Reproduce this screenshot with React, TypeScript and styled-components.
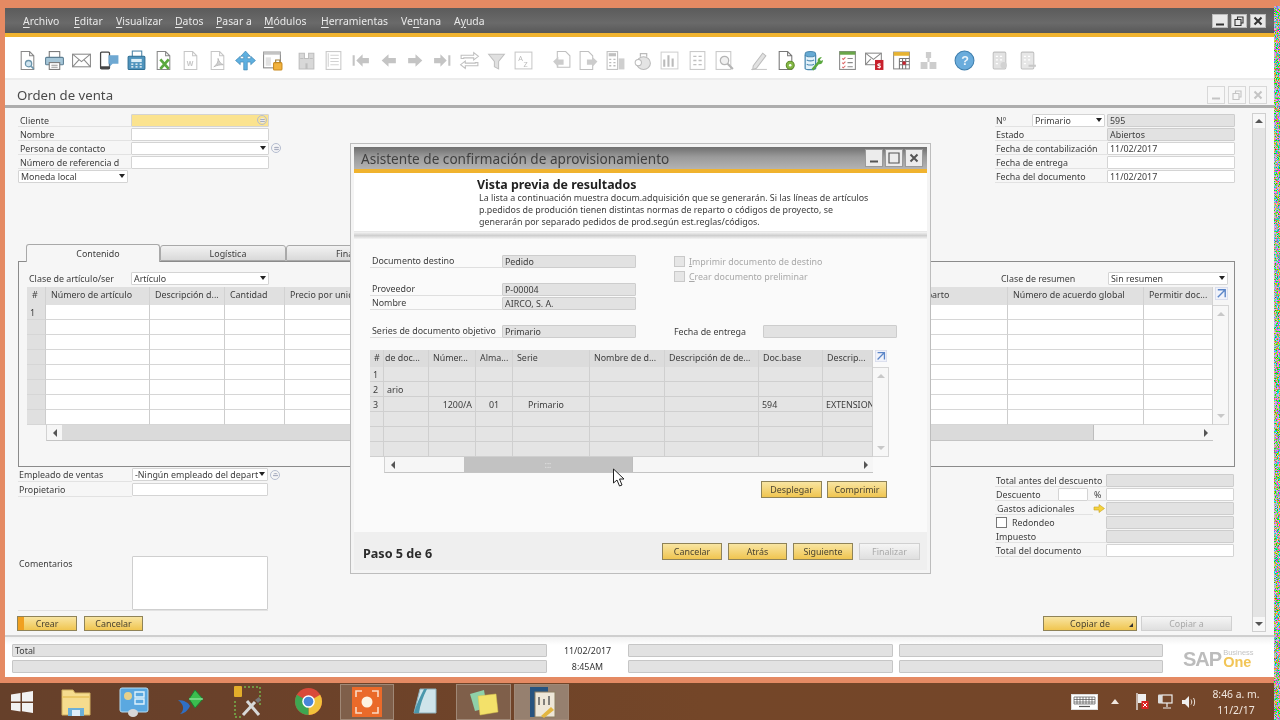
import React from 'react'
import styled, { createGlobalStyle } from 'styled-components'

const GlobalStyle = createGlobalStyle`
	html, body {
		margin: 0;
		padding: 0;
		background: #e58a63;
	}
	* {
		box-sizing: border-box;
	}
`

const Screen = styled.div`
	position: relative;
	width: 1280px;
	height: 720px;
	overflow: hidden;
	display: flex;
	flex-direction: column;
	background: #e58a63;
	color: #3c3c3c;
	font-family: 'Noto Sans', 'Open Sans', sans-serif;
	font-size: 8.9px;
	filter: blur(0.4px);
`

const Desktop = styled.div`
	height: 683px;
	padding: 8px 0 6px 5px;
	display: flex;
`

const AppWindow = styled.div`
	width: 1269px;
	display: flex;
	flex-direction: column;
	background: #f6f6f6;
`

const Noise = styled.svg`
	position: absolute;
	top: 6px;
	right: 0;
	width: 6px;
	height: 714px;
`

const MenuBar = styled.div`
	height: 29px;
	padding: 2px 8px 2px 18px;
	display: flex;
	align-items: center;
	background: linear-gradient(#5b5b5b, #6a6a6a 60%, #585858);
	border-bottom: 4px solid #f0b32f;
	color: #e9e9e9;
	font-size: 10.4px;
`

const MenuItem = styled.span<{ $w: number }>`
	width: ${(p) => p.$w}px;
	flex: none;
	u {
		text-underline-offset: 2px;
	}
`

const WinButtons = styled.div`
	margin-left: auto;
	display: flex;
	gap: 3px;
`

const WinButton = styled.div<{ $dim?: boolean }>`
	width: ${(p) => (p.$dim ? 18 : 16)}px;
	height: ${(p) => (p.$dim ? 18 : 14)}px;
	display: flex;
	align-items: center;
	justify-content: center;
	background: ${(p) => (p.$dim ? '#f7f7f7' : '#e8e8e8')};
	border: 1px solid ${(p) => (p.$dim ? '#d8d8d8' : '#bbb')};
	color: ${(p) => (p.$dim ? '#c4c4c4' : '#333')};
`

const Toolbar = styled.div`
	height: 43px;
	padding: 5px 0 0 9px;
	display: flex;
	align-items: center;
	background: #fff;
	border-bottom: 2px solid #ececec;
`

const Tool = styled.div<{ $gap?: number }>`
	width: 27.2px;
	flex: none;
	margin-left: ${(p) => p.$gap ?? 0}px;
	display: flex;
	justify-content: center;
	svg {
		display: block;
	}
`

const FormTitle = styled.div`
	height: 28px;
	padding: 4px 7px 0 12px;
	display: flex;
	align-items: center;
	justify-content: space-between;
	border-bottom: 3px solid #adadad;
	font-size: 13.2px;
	color: #4a4a4a;
`

const FormBody = styled.div`
	height: 529px;
	padding: 5px 8px 0 13px;
	display: flex;
	border-bottom: 2px solid #cfcfcf;
`

const FormMain = styled.div`
	width: 1217px;
	display: flex;
	flex-direction: column;
`

const HeaderBlock = styled.div`
	height: 130px;
	display: flex;
	justify-content: space-between;
`

const Rows = styled.div<{ $w: number }>`
	width: ${(p) => p.$w}px;
	display: flex;
	flex-direction: column;
`

const Row = styled.div<{ $cols: string; $h?: number }>`
	height: ${(p) => p.$h ?? 14}px;
	display: grid;
	grid-template-columns: ${(p) => p.$cols};
	align-items: center;
`

const Label = styled.div<{ $pad?: number }>`
	height: 100%;
	padding: 1px 0 0 ${(p) => p.$pad ?? 2}px;
	display: flex;
	align-items: center;
	border-bottom: 1px solid #e2e2e2;
	white-space: nowrap;
	overflow: hidden;
`

const Field = styled.div<{ $tone?: 'white' | 'gray' | 'yellow' }>`
	position: relative;
	height: 13px;
	padding: 0 2px;
	display: flex;
	align-items: center;
	white-space: nowrap;
	overflow: hidden;
	border: 1px solid ${(p) => (p.$tone === 'gray' ? '#cdcdcd' : '#d4d4d4')};
	border-radius: 1px;
	background: ${(p) => (p.$tone === 'gray' ? '#e2e2e2' : p.$tone === 'yellow' ? '#fbe38f' : '#fff')};
`

const Caret = styled.i`
	position: absolute;
	right: 2px;
	top: 3px;
	width: 0;
	height: 0;
	border: 3.5px solid transparent;
	border-top: 4px solid #222;
	border-bottom: 0;
`

const ListDot = styled.span<{ $inside?: boolean }>`
	width: 10px;
	height: 10px;
	margin-left: ${(p) => (p.$inside ? 'auto' : '2px')};
	margin-right: ${(p) => (p.$inside ? '-1px' : '0')};
	flex: none;
	border-radius: 50%;
	border: 1px solid #b5bdd0;
	background: repeating-linear-gradient(#e8e8ef 0 1px, #a9afc0 1px 2px);
	background-clip: content-box;
	padding: 1.5px;
`

const TabStrip = styled.div`
	height: 18px;
	padding-left: 8px;
	display: flex;
	align-items: flex-end;
`

const Tab = styled.div<{ $active?: boolean; $w: number }>`
	width: ${(p) => p.$w}px;
	height: ${(p) => (p.$active ? 18 : 16)}px;
	margin-bottom: ${(p) => (p.$active ? -1 : 0)}px;
	padding-left: 10px;
	position: relative;
	z-index: ${(p) => (p.$active ? 1 : 0)};
	display: flex;
	align-items: center;
	justify-content: center;
	border: 1px solid #a9a9a9;
	border-bottom: ${(p) => (p.$active ? '0' : '1px solid #a9a9a9')};
	border-radius: 3px 3px 0 0;
	background: ${(p) => (p.$active ? '#f6f6f6' : 'linear-gradient(#f2f2f2, #d9d9d9)')};
`

const Panel = styled.div`
	height: 206px;
	padding-top: 10px;
	border: 1px solid #8b8b8b;
`

const PanelTop = styled.div`
	height: 13px;
	padding: 0 6px 0 10px;
	display: flex;
	justify-content: space-between;
`

const PanelRow = styled.div<{ $label: number; $field: number }>`
	display: grid;
	grid-template-columns: ${(p) => p.$label}px ${(p) => p.$field}px;
	align-items: center;
`

const Sheet = styled.div<{ $left: number }>`
	margin: 2px 0 0 ${(p) => p.$left}px;
	display: flex;
	flex-direction: column;
`

const SheetTop = styled.div`
	display: flex;
`

const SheetGrid = styled.div<{ $w: number }>`
	width: ${(p) => p.$w}px;
	flex: none;
	overflow: hidden;
`

const SheetHead = styled.div<{ $cols: string; $h: number; $tone: string }>`
	height: ${(p) => p.$h}px;
	display: grid;
	grid-template-columns: ${(p) => p.$cols};
	background: ${(p) => p.$tone};
`

const HeadCell = styled.div<{ $pad: number }>`
	padding: 0 2px 3px ${(p) => p.$pad}px;
	display: flex;
	align-items: center;
	white-space: nowrap;
	overflow: hidden;
	border-right: 1px solid #d2d2d2;
`

const SheetRow = styled.div<{ $cols: string; $dim?: boolean }>`
	height: 15px;
	display: grid;
	grid-template-columns: ${(p) => p.$cols};
	background: ${(p) => (p.$dim ? '#e4e4e4' : '#fff')};
`

const Cell = styled.div<{ $align?: string; $head?: boolean; $dim?: boolean; $pad?: number }>`
	padding: 0 3px 0 ${(p) => p.$pad ?? 3}px;
	display: flex;
	align-items: center;
	justify-content: ${(p) => p.$align ?? 'flex-start'};
	white-space: nowrap;
	overflow: hidden;
	border-right: 1px solid ${(p) => (p.$dim ? '#cfcfcf' : '#cdcdcd')};
	border-bottom: 1px solid ${(p) => (p.$dim ? '#cfcfcf' : '#d6d6d6')};
	background: ${(p) => (p.$head ? '#e0e0e0' : 'transparent')};
`

const SheetSide = styled.div`
	width: 16px;
	flex: none;
	display: flex;
	flex-direction: column;
`

const ExpandBox = styled.div<{ $h: number }>`
	height: ${(p) => p.$h}px;
	display: flex;
	align-items: flex-start;
	justify-content: center;
	svg {
		display: block;
	}
`

const VTrack = styled.div`
	flex: 1;
	display: flex;
	flex-direction: column;
	justify-content: space-between;
	align-items: center;
	padding: 3px 0;
	background: #f7f7f7;
	border: 1px solid #d6d6d6;
	border-left: 0;
`

const ArrowUp = styled.i<{ $dark?: boolean }>`
	width: 0;
	height: 0;
	margin: 3px 0;
	border: 4px solid transparent;
	border-top: 0;
	border-bottom: 4px solid ${(p) => (p.$dark ? '#555' : '#c8c8c8')};
`

const ArrowDown = styled(ArrowUp)`
	border-bottom: 0;
	border-top: 4px solid ${(p) => (p.$dark ? '#555' : '#c8c8c8')};
`

const HScroll = styled.div<{ $left: number; $w: number }>`
	width: ${(p) => p.$w}px;
	height: 16px;
	margin-left: ${(p) => p.$left}px;
	display: flex;
	align-items: stretch;
	background: #f6f6f6;
	border-bottom: 1px solid #c4c4c4;
	border-left: 1px solid #d2d2d2;
`

const HButton = styled.div`
	width: 15px;
	flex: none;
	display: flex;
	align-items: center;
	justify-content: center;
	&::before {
		content: '';
		border: 4px solid transparent;
		border-left: 0;
		border-right: 4px solid #555;
	}
`

const HButtonRight = styled(HButton)`
	margin-left: auto;
	&::before {
		border: 4px solid transparent;
		border-right: 0;
		border-left: 4px solid #555;
	}
`

const HThumb = styled.div<{ $w: number; $left: number; $tone: string }>`
	width: ${(p) => p.$w}px;
	margin-left: ${(p) => p.$left}px;
	display: flex;
	align-items: center;
	justify-content: center;
	background: ${(p) => p.$tone};
	color: #e8e8e8;
	font-size: 8px;
	line-height: 1;
	border-right: 1px solid #bdbdbd;
`

const Lower = styled.div`
	height: 149px;
	display: flex;
	justify-content: space-between;
`

const LowerLeft = styled.div`
	width: 265px;
	display: flex;
	flex-direction: column;
`

const LowerRight = styled.div`
	width: 240px;
	padding-top: 6px;
	display: flex;
	flex-direction: column;
`

const Comments = styled.div`
	width: 250px;
	margin-top: 59px;
	height: 55px;
	display: grid;
	grid-template-columns: 114px 136px;
	border-bottom: 1px solid #e2e2e2;
`

const CommentLabel = styled.div`
	padding: 1px 0 0 1px;
`

const CommentBox = styled.div`
	background: #fff;
	border: 1px solid #cfcfcf;
	border-radius: 1px;
`

const RoundCheck = styled.span`
	display: flex;
	align-items: center;
	gap: 5px;
	padding-left: 1px;
`

const Checkbox = styled.i<{ $dim?: boolean }>`
	width: 11px;
	height: 11px;
	flex: none;
	background: ${(p) => (p.$dim ? '#e6e6e6' : '#fff')};
	border: 1px solid ${(p) => (p.$dim ? '#c9c9c9' : '#777')};
`

const Buttons = styled.div`
	display: flex;
	justify-content: space-between;
	padding-right: 3px;
	margin-left: -1px;
`

const ButtonGroup = styled.div<{ $gap: number }>`
	display: flex;
	gap: ${(p) => p.$gap}px;
`

const YellowButton = styled.div<{ $w: number; $h?: number; $off?: boolean; $focus?: boolean }>`
	position: relative;
	width: ${(p) => p.$w}px;
	height: ${(p) => p.$h ?? 15}px;
	display: flex;
	align-items: center;
	justify-content: center;
	border: 1px solid ${(p) => (p.$off ? '#d0d0d0' : '#8f8358')};
	color: ${(p) => (p.$off ? '#a9a9a9' : '#4a4330')};
	background: ${(p) =>
		p.$off
			? 'linear-gradient(#f5f5f5, #dfdfdf)'
			: p.$focus
				? 'linear-gradient(90deg, #f0a020 0 6px, transparent 6px), linear-gradient(#f8e5a2, #f0c550)'
				: 'linear-gradient(#f8e5a2, #f0c550)'};
`

const MenuMark = styled.i`
	position: absolute;
	right: 3px;
	bottom: 3px;
	width: 0;
	height: 0;
	border-left: 4px solid transparent;
	border-bottom: 4px solid #333;
`

const FormScroll = styled.div`
	width: 14px;
	height: 519px;
	margin-left: 17px;
	display: flex;
	flex-direction: column;
	justify-content: space-between;
	align-items: center;
	background: #e4e4e4;
	border: 1px solid #cfcfcf;
`

const ScrollEnd = styled.div`
	width: 12px;
	height: 14px;
	display: flex;
	align-items: center;
	justify-content: center;
	background: #f7f7f7;
`

const StatusBar = styled.div`
	height: 40px;
	padding: 7px 0 0 7px;
	display: grid;
	grid-template-columns: 535px 81px 265px 6px 264px 1fr;
	grid-template-rows: 13px 13px;
	row-gap: 3px;
	background: linear-gradient(#f1f1f1, #fff 8px);
`

const StatusField = styled.div`
	padding-left: 2px;
	display: flex;
	align-items: center;
	background: #e2e2e2;
	border: 1px solid #c6c6c6;
	border-radius: 1px;
`

const StatusText = styled.div`
	display: flex;
	align-items: center;
	justify-content: center;
	color: #333;
`

const Gap = styled.div``

const SapLogo = styled.div`
	grid-row: 1 / span 2;
	grid-column: 6;
	padding: 1px 0 0 20px;
	display: flex;
	align-items: center;
	gap: 2px;
`

const SapMark = styled.span`
	font-family: 'Liberation Sans', sans-serif;
	font-weight: 700;
	font-size: 20px;
	letter-spacing: -1px;
	color: #bcbcbc;
`

const SapStack = styled.span`
	display: flex;
	flex-direction: column;
	line-height: 1;
	font-family: 'Liberation Sans', sans-serif;
`

const SapBusiness = styled.span`
	font-size: 7.5px;
	color: #c4c4c4;
`

const SapOne = styled.span`
	font-size: 14.5px;
	font-weight: 700;
	color: #f2c557;
	margin-top: -1px;
`

const Taskbar = styled.div`
	height: 37px;
	display: flex;
	align-items: center;
	padding-right: 9px;
	background: linear-gradient(90deg, #66402a, #6a412a 18%, #744628 55%, #74462a);
	color: #f0e6de;
`

const TaskSlot = styled.div<{ $w: number; $gap?: number; $on?: 'soft' | 'strong' }>`
	width: ${(p) => p.$w}px;
	height: 36px;
	margin-left: ${(p) => p.$gap ?? 0}px;
	flex: none;
	display: flex;
	align-items: center;
	justify-content: center;
	background: ${(p) => (p.$on === 'strong' ? '#96806f' : p.$on === 'soft' ? '#7f5f4a' : 'transparent')};
	border: ${(p) => (p.$on ? '1px solid #a08876' : '0')};
`

const Tray = styled.div`
	margin-left: auto;
	display: flex;
	align-items: center;
`

const TrayIcon = styled.div<{ $w: number }>`
	width: ${(p) => p.$w}px;
	display: flex;
	justify-content: center;
`

const Clock = styled.div`
	width: 70px;
	margin-left: 1px;
	display: flex;
	flex-direction: column;
	align-items: center;
	gap: 4px;
	font-size: 10.4px;
	line-height: 12px;
`

const Dialog = styled.div`
	position: absolute;
	left: 350px;
	top: 143px;
	width: 581px;
	height: 431px;
	padding: 3px;
	display: flex;
	flex-direction: column;
	background: #f4f4f4;
	border: 1px solid #bdbdbd;
`

const DialogTitle = styled.div`
	height: 26px;
	padding: 0 4px 0 7px;
	display: flex;
	align-items: center;
	justify-content: space-between;
	flex: none;
	background: linear-gradient(#6f6f6f, #9a9a9a 45%, #b3b3b3);
	border-bottom: 4px solid #f0b32f;
	font-size: 13.6px;
	color: #3f3f3f;
`

const DialogButton = styled.div`
	width: 18px;
	height: 18px;
	display: flex;
	align-items: center;
	justify-content: center;
	background: #ececec;
	border: 1px solid #9a9a9a;
	color: #555;
`

const DialogButtons = styled.div`
	display: flex;
	gap: 2px;
	margin-top: -1px;
`

const DialogHead = styled.div`
	height: 59px;
	flex: none;
	padding: 4px 0 0 123px;
	background: #fff;
	border-bottom: 1px solid #e8e8e8;
`

const WizardTitle = styled.div`
	font-size: 12.4px;
	font-weight: 700;
	line-height: 15px;
	color: #222;
`

const WizardText = styled.div`
	padding-left: 2px;
	line-height: 12px;
	color: #3c3c3c;
	white-space: nowrap;
`

const DialogRule = styled.div`
	height: 7px;
	flex: none;
	background: linear-gradient(#f4f4f4, #cfcfcf 50%, #f4f4f4);
`

const DialogContent = styled.div`
	height: 293px;
	flex: none;
	padding: 15px 0 0 16px;
	background: #fafafa;
	display: flex;
	flex-direction: column;
`

const DialogFields = styled.div`
	height: 94px;
	display: grid;
	grid-template-columns: 304px 1fr;
`

const DialogColumn = styled.div`
	display: flex;
	flex-direction: column;
`

const DialogRow = styled.div<{ $top?: number }>`
	height: 14px;
	margin-top: ${(p) => p.$top ?? 0}px;
	display: grid;
	grid-template-columns: 132px 134px;
	align-items: center;
`

const DialogLabel = styled.div`
	height: 100%;
	padding-left: 2px;
	display: flex;
	align-items: center;
	border-bottom: 1px solid #dfdfdf;
	white-space: nowrap;
`

const DialogOption = styled.div`
	height: 15px;
	display: flex;
	align-items: center;
	gap: 4px;
	color: #a8a8a8;
	u {
		text-underline-offset: 1px;
	}
`

const DeliveryRow = styled.div`
	margin-top: 40px;
	height: 14px;
	display: grid;
	grid-template-columns: 89px 134px;
	align-items: center;
`

const DialogActions = styled.div`
	margin: 8px 0 0 391px;
	display: flex;
	gap: 5px;
`

const DialogFooter = styled.div`
	flex: 1;
	padding: 1px 7px 0 9px;
	display: flex;
	align-items: center;
	justify-content: space-between;
	background: #efefef;
`

const StepText = styled.div`
	margin-top: 3px;
	font-size: 12.6px;
	font-weight: 700;
	color: #2c2c2c;
`

const Pointer = styled.svg`
	position: absolute;
	left: 612px;
	top: 468px;
`

// toolbar drawings, all on a 20x20 box
const Page = ({ c = '#8a8a8a' }: { c?: string }) => (
	<path d="M4 1.500h8l4 4v13H4zM12 1.500v4h4" fill="#fff" stroke={c} strokeWidth="1" />
)

const toolIcons: { gap?: number; art: React.ReactNode }[] = [
	{ art: <><Page c="#888" /><circle cx="11" cy="13" r="3" fill="#cfe4ef" stroke="#6a94ab" strokeWidth="1.200" /><path d="M13.500 15.500l2.500 2.500" stroke="#6a94ab" strokeWidth="1.600" /></> },
	{ art: <><rect x="5" y="1.500" width="10" height="6" fill="#fff" stroke="#777" /><rect x="1.500" y="7" width="17" height="7" rx="1" fill="#a5c6d8" stroke="#5d7f94" /><rect x="5" y="12" width="10" height="6.500" fill="#fff" stroke="#777" /><path d="M7 14.500h6M7 16.500h6" stroke="#999" /></> },
	{ art: <><rect x="1.500" y="4" width="17" height="12" fill="#fff" stroke="#8a8a8a" /><path d="M1.500 4l8.500 7 8.500-7M1.500 16l6-6.500M18.500 16l-6-6.500" fill="none" stroke="#8a8a8a" /></> },
	{ art: <><rect x="1.500" y="2" width="8.500" height="16" rx="1" fill="#fff" stroke="#444" strokeWidth="1.200" /><rect x="1.500" y="15.500" width="8.500" height="2.500" fill="#444" /><path d="M9 5h9.500v8H13l-3 3v-3H9z" fill="#6ea8d2" /></> },
	{ art: <><rect x="6" y="1" width="9" height="6" fill="#fff" stroke="#4a83a5" /><rect x="2" y="6" width="16" height="12.500" rx="1" fill="#4f94bd" stroke="#2f6f94" /><rect x="5" y="8.500" width="10" height="3" fill="#dceff8" /><path d="M5 13.500h2M9 13.500h2M13 13.500h2M5 16h2M9 16h2M13 16h2" stroke="#fff" strokeWidth="1.200" /></> },
	{ art: <><Page c="#888" /><path d="M7 9l8 9M15 9l-8 9" stroke="#5aa83f" strokeWidth="2.600" /></> },
	{ art: <><Page c="#c6c6c6" /><text x="6.500" y="15" fontSize="6.500" fontWeight="700" fill="#c6c6c6">W</text></> },
	{ art: <><Page c="#c6c6c6" /><path d="M6.500 16c3-2 4.500-5 4-8 1 3 2.500 5 5 6-3 0-6 .500-9 2z" fill="#d0d0d0" stroke="#b5b5b5" strokeWidth=".8" /></> },
	{ art: <path d="M10 1l4.500 5h-2.800v2.300H15V6l4.500 4-4.500 4v-2.500h-3.300V19H8.300v-7.500H5V14L.500 10 5 6v2.300h3.300V6H5.500z" fill="#5fb0e0" stroke="#3b82b0" strokeWidth=".6" /> },
	{ art: <><rect x="1.500" y="2" width="16" height="15" fill="#fff" stroke="#888" /><rect x="1.500" y="2" width="16" height="2.500" fill="#c4c4c4" /><rect x="3.500" y="7" width="5" height="8" fill="#e2e2e2" /><rect x="11" y="12" width="8" height="7" rx="1" fill="#f2b23c" stroke="#c98a1e" /><path d="M13 12V9.500h4V12" fill="none" stroke="#a08040" strokeWidth="1.100" /></> },
	{ gap: 7, art: <path d="M3 3h5v5H12V3h5v15h-6.500v-5h-1v5H3zM4 8h3M13 8h3" fill="#d8d8d8" stroke="#bdbdbd" /> },
	{ art: <><rect x="3" y="1.500" width="14" height="17" fill="#fff" stroke="#c8c8c8" /><path d="M7 5h8M7 8h8M7 11h8M7 14h8M5 3v13" stroke="#d2d2d2" /></> },
	{ art: <path d="M2.500 5h2v10h-2zM18 7.500v5h-6v3.500L6 10l6-6v3.500z" fill="#c4c4c4" /> },
	{ art: <path d="M17 7.500v5h-7V16L3.500 10 10 4v3.500z" fill="#c4c4c4" /> },
	{ art: <path d="M3 7.500v5h7V16l6.500-6L10 4v3.500z" fill="#c4c4c4" /> },
	{ art: <path d="M15.500 5h2v10h-2zM2 7.500v5h6V16l6-6-6-6v3.500z" fill="#c4c4c4" /> },
	{ art: <path d="M2 8V5h12V2.500L18.500 6 14 9.500V7.500H4.500V8zM18 12v3H6v2.500L1.500 14 6 10.500v2h9.500V12z" fill="#fff" stroke="#c0c0c0" /> },
	{ art: <path d="M2.500 4h15l-5.500 7v7l-4-2v-5z" fill="#e0e0e0" stroke="#c0c0c0" /> },
	{ art: <><rect x="2" y="2" width="16" height="16" fill="#fff" stroke="#c8c8c8" /><text x="5" y="10" fontSize="7" fill="#bbb">A</text><text x="10" y="16.500" fontSize="7" fill="#bbb">Z</text></> },
	{ gap: 10, art: <><path d="M6 1.500h8l4 4v11H6z" fill="#fff" stroke="#c0c0c0" /><path d="M2 11l5-4.500V9h5v5H7v2.500z" fill="#ccc" /></> },
	{ art: <><path d="M2 1.500h8l4 4v13H2z" fill="#fff" stroke="#c0c0c0" /><path d="M18.500 11l-5-4.500V9h-5v5h5v2.500z" fill="#ccc" /></> },
	{ art: <><rect x="2" y="1.500" width="10" height="17" fill="#fff" stroke="#c0c0c0" /><rect x="3.500" y="3" width="7" height="3" fill="#c0c0c0" /><path d="M4 9h2M8 9h2M4 12h2M8 12h2M4 15h2M8 15h2" stroke="#bbb" strokeWidth="1.200" /><rect x="13" y="8" width="5.500" height="10.500" fill="#cfcfcf" /></> },
	{ art: <><ellipse cx="11" cy="12.500" rx="6.500" ry="6" fill="#e4e4e4" stroke="#bbb" /><path d="M8 6.500V3.500h6v3" fill="none" stroke="#bbb" strokeWidth="1.200" /><circle cx="6" cy="12" r="3" fill="#fff" stroke="#bbb" /></> },
	{ art: <><rect x="2" y="2" width="16" height="16" fill="#fff" stroke="#d0d0d0" /><path d="M5 16V9M9 16V5M13 16v-8" stroke="#bbb" strokeWidth="2" /></> },
	{ art: <><rect x="3" y="1.500" width="14" height="17" fill="#fff" stroke="#c8c8c8" /><path d="M6 6h3M11 6h3M6 10h3M11 10h3M6 14h3M11 14h3" stroke="#c0c0c0" strokeWidth="1.200" /></> },
	{ art: <><rect x="2" y="1.500" width="14" height="17" fill="#fff" stroke="#c8c8c8" /><circle cx="10" cy="10" r="4" fill="#f0f0f0" stroke="#b5b5b5" strokeWidth="1.200" /><path d="M13 13l5 5" stroke="#b5b5b5" strokeWidth="2" /></> },
	{ gap: 7, art: <><path d="M3 18.500h15" stroke="#c8c8c8" /><path d="M5 15l9-12 3 2.500-9 12-3.500 1z" fill="#e2e2e2" stroke="#bdbdbd" /></> },
	{ art: <><Page c="#777" /><circle cx="14.500" cy="14.500" r="3.800" fill="#84b845" stroke="#5d8a2a" /><circle cx="14.500" cy="14.500" r="1.200" fill="#fff" /></> },
	{ art: <><path d="M3 4.500v13c0 1.500 10 1.500 10 0v-13" fill="#e4f2fa" stroke="#4a88b0" strokeWidth="1.200" /><ellipse cx="8" cy="4" rx="5" ry="2.500" fill="#66aad4" stroke="#4a88b0" /><path d="M4.500 9.500c2 1 5 1 7 0M4.500 13.500c2 1 5 1 7 0" fill="none" stroke="#4a88b0" /><path d="M9 18l6-7c-.5-2 1-4.500 4-4l-2 2 1 1.500 2-1c0 3-2 4.500-4 4l-5 6z" fill="#5aa83f" /></> },
	{ gap: 7, art: <><rect x="2.500" y="1.500" width="15" height="17" fill="#fff" stroke="#888" /><rect x="2.500" y="1.500" width="15" height="3" fill="#6aa64a" /><path d="M5 8l1 1 2-2M5 12l1 1 2-2M5 16l1 1 2-2" fill="none" stroke="#d66" /><path d="M10 8h5M10 12h5M10 16h5" stroke="#888" /></> },
	{ art: <><rect x="1.500" y="3" width="15" height="11" fill="#fff" stroke="#888" /><path d="M1.500 3l7.500 6 7.500-6M1.500 14l5-5.500" fill="none" stroke="#888" /><rect x="10.500" y="9.500" width="8" height="9.500" fill="#c8202c" /><text x="12.500" y="17" fontSize="7" fontWeight="700" fill="#fff">$</text></> },
	{ art: <><rect x="2.500" y="2" width="15" height="16" fill="#fff" stroke="#888" /><rect x="2.500" y="2" width="15" height="3.500" fill="#e7b331" /><path d="M8 8h9.500M8 11h9.500M8 14h9.500M8 8v10M11 8v10M14 8v10" stroke="#777" /><rect x="11" y="11" width="3" height="3" fill="#c8202c" /></> },
	{ art: <path d="M7.500 2h5v5.500h-5zM2.500 11.500h6.500V18H2.500zM11 11.500h6.500V18H11zM9 7.500h2v4H9z" fill="#cdcdcd" /> },
	{ gap: 9, art: <><circle cx="10" cy="10" r="9" fill="#6aacdc" stroke="#3f7fae" /><text x="7" y="14.500" fontSize="12" fontWeight="700" fill="#eaf4fb" fontFamily="Liberation Sans">?</text></> },
	{ gap: 8, art: <><rect x="4" y="2" width="12" height="16" rx="1" fill="#e2e2e2" stroke="#c0c0c0" /><path d="M6.500 6h2M10.500 6h2M6.500 9.500h2M10.500 9.500h2M6.500 13h2" stroke="#fff" strokeWidth="1.200" /><circle cx="14" cy="14.500" r="3" fill="#d2d2d2" /></> },
	{ art: <><rect x="4" y="2" width="12" height="16" rx="1" fill="#e6e6e6" stroke="#c0c0c0" /><path d="M6.500 6h2M10.500 6h2M6.500 9.500h2M10.500 9.500h2M6.500 13h2" stroke="#fff" strokeWidth="1.200" /><path d="M11 15h7" stroke="#c8c8c8" strokeWidth="2" /></> }
]

const Glyph = ({ size, children }: { size: number; children: React.ReactNode }) => (
	<svg width={size} height={size} viewBox="0 0 20 20">
		{children}
	</svg>
)

const Minimize = () => (
	<svg width="10" height="10" viewBox="0 0 10 10">
		<path d="M1 8.500h8" stroke="currentColor" strokeWidth="2" />
	</svg>
)
const Restore = () => (
	<svg width="10" height="10" viewBox="0 0 10 10">
		<path d="M1 3.500h6v6H1zM3.500 3V1H9v6H7.500" fill="none" stroke="currentColor" strokeWidth="1.100" />
	</svg>
)
const Maximize = () => (
	<svg width="12" height="12" viewBox="0 0 12 12">
		<path d="M1 1h10v10H1z" fill="none" stroke="currentColor" strokeWidth="1.200" />
	</svg>
)
const Close = () => (
	<svg width="10" height="10" viewBox="0 0 10 10">
		<path d="M1.500 1.500l7 7M8.500 1.500l-7 7" stroke="currentColor" strokeWidth="2" />
	</svg>
)
const Expand = ({ size }: { size: number }) => (
	<svg width={size} height={size} viewBox="0 0 14 14">
		<rect x=".5" y=".5" width="13" height="13" fill="#f0f2fa" stroke="#d8dcec" />
		<path d="M3 3h8v8M11 3l-8 8" fill="none" stroke="#5b86c8" strokeWidth="1.500" />
	</svg>
)

const itemCols = '19px 104px 75px 60px 170px 414px 139px 136px 69px'
const itemHead = ['#', 'Número de artículo', 'Descripción d...', 'Cantidad', 'Precio por unidad', '', 'Norma de reparto', 'Número de acuerdo global', 'Permitir doc...']

const wizardCols = '14px 45px 47px 37px 77px 75px 94px 64px 50px'
const wizardHead = ['#', 'de doc...', 'Númer...', 'Alma...', 'Serie', 'Nombre de d...', 'Descripción de de...', 'Doc.base', 'Descrip...']
const wizardRows = [
	['1', '', '', '', '', '', '', '', ''],
	['2', 'ario', '', '', '', '', '', '', ''],
	['3', '', '1200/A', '01', 'Primario', '', '', '594', 'EXTENSION'],
	['', '', '', '', '', '', '', '', ''],
	['', '', '', '', '', '', '', '', ''],
	['', '', '', '', '', '', '', '', '']
]

const rowKeys = [0, 1, 2, 3, 4, 5, 6, 7]

const cellAlign = (col: number): string | undefined => {
	if (col === 2) return 'flex-end'
	if (col === 3) return 'center'
	return undefined
}

const App = () => (
	<Screen>
		<GlobalStyle />
		<Desktop>
			<AppWindow>
				<MenuBar>
					<MenuItem $w={51}><u>A</u>rchivo</MenuItem>
					<MenuItem $w={42}><u>E</u>ditar</MenuItem>
					<MenuItem $w={59}><u>V</u>isualizar</MenuItem>
					<MenuItem $w={41}><u>D</u>atos</MenuItem>
					<MenuItem $w={48}><u>P</u>asar a</MenuItem>
					<MenuItem $w={57}><u>M</u>ódulos</MenuItem>
					<MenuItem $w={80}><u>H</u>erramientas</MenuItem>
					<MenuItem $w={53}>Ve<u>n</u>tana</MenuItem>
					<MenuItem $w={40}>A<u>y</u>uda</MenuItem>
					<WinButtons>
						<WinButton><Minimize /></WinButton>
						<WinButton><Restore /></WinButton>
						<WinButton><Close /></WinButton>
					</WinButtons>
				</MenuBar>

				<Toolbar>
					{toolIcons.map((tool, i) => (
						<Tool key={i} $gap={tool.gap}>
							<Glyph size={21}>{tool.art}</Glyph>
						</Tool>
					))}
				</Toolbar>

				<FormTitle>
					Orden de venta
					<WinButtons>
						<WinButton $dim><Minimize /></WinButton>
						<WinButton $dim><Restore /></WinButton>
						<WinButton $dim><Close /></WinButton>
					</WinButtons>
				</FormTitle>

				<FormBody>
					<FormMain>
						<HeaderBlock>
							<Rows $w={264}>
								<Row $cols="113px 138px">
									<Label>Cliente</Label>
									<Field $tone="yellow"><ListDot $inside /></Field>
								</Row>
								<Row $cols="113px 138px">
									<Label>Nombre</Label>
									<Field />
								</Row>
								<Row $cols="113px 138px 13px">
									<Label>Persona de contacto</Label>
									<Field><Caret /></Field>
									<ListDot />
								</Row>
								<Row $cols="113px 138px">
									<Label>Número de referencia d</Label>
									<Field />
								</Row>
								<Row $cols="110px">
									<Field>Moneda local<Caret /></Field>
								</Row>
							</Rows>
							<Rows $w={240}>
								<Row $cols="37px 73px 2px 128px">
									<Label $pad={1}>Nº</Label>
									<Field>Primario<Caret /></Field>
									<span />
									<Field $tone="gray">595</Field>
								</Row>
								<Row $cols="112px 128px">
									<Label $pad={1}>Estado</Label>
									<Field $tone="gray">Abiertos</Field>
								</Row>
								<Row $cols="112px 128px">
									<Label $pad={1}>Fecha de contabilización</Label>
									<Field>11/02/2017</Field>
								</Row>
								<Row $cols="112px 128px">
									<Label $pad={1}>Fecha de entrega</Label>
									<Field />
								</Row>
								<Row $cols="112px 128px">
									<Label $pad={1}>Fecha del documento</Label>
									<Field>11/02/2017</Field>
								</Row>
							</Rows>
						</HeaderBlock>

						<TabStrip>
							<Tab $active $w={134}>Contenido</Tab>
							<Tab $w={126}>Logística</Tab>
							<Tab $w={126}>Finanzas</Tab>
						</TabStrip>
						<Panel>
							<PanelTop>
								<PanelRow $label={102} $field={138}>
									Clase de artículo/ser
									<Field>Artículo<Caret /></Field>
								</PanelRow>
								<PanelRow $label={107} $field={120}>
									Clase de resumen
									<Field>Sin resumen<Caret /></Field>
								</PanelRow>
							</PanelTop>
							<Sheet $left={8}>
								<SheetTop>
									<SheetGrid $w={1186}>
										<SheetHead $cols={itemCols} $h={18} $tone="#e0e0e0">
											{itemHead.map((t, i) => (
												<HeadCell key={i} $pad={5}>{t}</HeadCell>
											))}
										</SheetHead>
										{rowKeys.map((r) => (
											<SheetRow key={r} $cols={itemCols}>
												{itemHead.map((_, c) => (
													<Cell key={c} $head={c === 0}>
														{c === 0 && r === 0 ? '1' : ''}
													</Cell>
												))}
											</SheetRow>
										))}
									</SheetGrid>
									<SheetSide>
										<ExpandBox $h={18}><Expand size={13} /></ExpandBox>
										<VTrack>
											<ArrowUp />
											<ArrowDown />
										</VTrack>
									</SheetSide>
								</SheetTop>
								<HScroll $left={19} $w={1167}>
									<HButton />
									<HThumb $w={1032} $left={0} $tone="#dadada">:::</HThumb>
									<HButtonRight />
								</HScroll>
							</Sheet>
						</Panel>

						<Lower>
							<LowerLeft>
								<Row $cols="114px 136px 13px" $h={15}>
									<Label $pad={1}>Empleado de ventas</Label>
									<Field>-Ningún empleado del depart<Caret /></Field>
									<ListDot />
								</Row>
								<Row $cols="114px 136px" $h={15}>
									<Label $pad={1}>Propietario</Label>
									<Field />
								</Row>
								<Comments>
									<CommentLabel>Comentarios</CommentLabel>
									<CommentBox />
								</Comments>
							</LowerLeft>
							<LowerRight>
								<Row $cols="111px 128px">
									<Label $pad={1}>Total antes del descuento</Label>
									<Field $tone="gray" />
								</Row>
								<Row $cols="63px 30px 18px 128px">
									<Label $pad={1}>Descuento</Label>
									<Field />
									<Label $pad={6}>%</Label>
									<Field />
								</Row>
								<Row $cols="98px 13px 128px">
									<Label $pad={2}>Gastos adicionales</Label>
									<svg width="12" height="9" viewBox="0 0 12 9">
										<path d="M1 3h5V.5L11.500 4.500 6 8.500V6H1z" fill="#f4d23e" stroke="#c9a21f" strokeWidth=".6" />
									</svg>
									<Field $tone="gray" />
								</Row>
								<Row $cols="111px 128px">
									<RoundCheck><Checkbox />Redondeo</RoundCheck>
									<Field $tone="gray" />
								</Row>
								<Row $cols="111px 128px">
									<Label $pad={1}>Impuesto</Label>
									<Field $tone="gray" />
								</Row>
								<Row $cols="111px 128px">
									<Label $pad={1}>Total del documento</Label>
									<Field />
								</Row>
							</LowerRight>
						</Lower>

						<Buttons>
							<ButtonGroup $gap={7}>
								<YellowButton $w={60} $focus>Crear</YellowButton>
								<YellowButton $w={59}>Cancelar</YellowButton>
							</ButtonGroup>
							<ButtonGroup $gap={4}>
								<YellowButton $w={94}>Copiar de<MenuMark /></YellowButton>
								<YellowButton $w={91} $off>Copiar a</YellowButton>
							</ButtonGroup>
						</Buttons>
					</FormMain>
					<FormScroll>
						<ScrollEnd><ArrowUp $dark /></ScrollEnd>
						<ScrollEnd><ArrowDown $dark /></ScrollEnd>
					</FormScroll>
				</FormBody>

				<StatusBar>
					<StatusField>Total</StatusField>
					<StatusText>11/02/2017</StatusText>
					<StatusField />
					<Gap />
					<StatusField />
					<SapLogo>
						<SapMark>SAP</SapMark>
						<SapStack>
							<SapBusiness>Business</SapBusiness>
							<SapOne>One</SapOne>
						</SapStack>
					</SapLogo>
					<StatusField />
					<StatusText>8:45AM</StatusText>
					<StatusField />
					<Gap />
					<StatusField />
				</StatusBar>
			</AppWindow>
		</Desktop>

		<Taskbar>
			<TaskSlot $w={44}>
				<svg width="24" height="24" viewBox="0 0 24 24">
					<path d="M1 4.500l9.500-1.500v8.500H1zM12 2.800L23 1v10.500H12zM1 13h9.500v8.500L1 20zM12 13h11v10l-11-1.700z" fill="#f2f2f2" />
				</svg>
			</TaskSlot>
			<TaskSlot $w={32} $gap={16}>
				<svg width="32" height="32" viewBox="0 0 32 32">
					<path d="M2 4h11l2 3h15v22H2z" fill="#f5dc8e" stroke="#d0b060" />
					<path d="M2 11h28" stroke="#eac868" strokeWidth="2" />
					<path d="M8 22h16v8H8z" fill="#6cb0d8" />
					<path d="M12 24h8v6h-8z" fill="#dff0fa" />
				</svg>
			</TaskSlot>
			<TaskSlot $w={32} $gap={26}>
				<svg width="30" height="32" viewBox="0 0 30 32">
					<rect x="1" y="2" width="28" height="24" rx="2" fill="#5aa8e0" stroke="#b5dcf2" />
					<circle cx="9" cy="10" r="4" fill="#e6d08a" />
					<path d="M16 6h9v5h-9zM16 13h9v5h-9z" fill="none" stroke="#e0f2fc" strokeWidth="1.400" />
					<ellipse cx="14" cy="27" rx="5" ry="4" fill="#d8d8d8" />
				</svg>
			</TaskSlot>
			<TaskSlot $w={32} $gap={26}>
				<svg width="30" height="30" viewBox="0 0 30 30">
					<path d="M18 3l8 9-8 9-6-9z" fill="#3bbd4f" stroke="#1c7c30" />
					<path d="M12 12h14" stroke="#a8f0b4" />
					<path d="M1 13c6 0 11 3 12 6-2 5-7 8-10 8 4-3 5-9-2-14z" fill="#2f6fc4" />
				</svg>
			</TaskSlot>
			<TaskSlot $w={32} $gap={24}>
				<svg width="30" height="34" viewBox="0 0 30 34">
					<rect x="1" y="1" width="8" height="11" rx="1" fill="#e3ad2a" />
					<path d="M11 2h16v18M2 16v16h8" fill="none" stroke="#76b34b" strokeWidth="1.500" strokeDasharray="2 2" />
					<path d="M10 30l12-13M14 16l12 14" stroke="#d8d8d8" strokeWidth="3" />
					<path d="M22 15l4-3 2 3-3 3z" fill="#777" />
				</svg>
			</TaskSlot>
			<TaskSlot $w={32} $gap={28}>
				<svg width="29" height="29" viewBox="0 0 30 30">
					<circle cx="15" cy="15" r="14" fill="#d94a3a" />
					<path d="M15 15L27.100 8A14 14 0 0 1 15 29z" fill="#f2c23b" />
					<path d="M15 15L15 29A14 14 0 0 1 2.900 8z" fill="#3ea651" />
					<circle cx="15" cy="15" r="6.500" fill="#fff" />
					<circle cx="15" cy="15" r="5" fill="#4a86d8" />
				</svg>
			</TaskSlot>
			<TaskSlot $w={54} $gap={16} $on="soft">
				<svg width="30" height="30" viewBox="0 0 30 30">
					<rect width="30" height="30" fill="#ea6a2a" />
					<path d="M4 10V4h6M20 4h6v6M26 20v6h-6M10 26H4v-6" fill="none" stroke="#fbd9c4" strokeWidth="1.600" />
					<circle cx="15" cy="15" r="5.500" fill="#fdf3e2" />
				</svg>
			</TaskSlot>
			<TaskSlot $w={32} $gap={15}>
				<svg width="28" height="30" viewBox="0 0 28 30">
					<path d="M9 2h16v24H3z" fill="#cfe4ea" stroke="#8db0ba" />
					<path d="M3 26c2-8 6-16 10-24h3c-4 8-7 16-8 24z" fill="#4a97ac" />
				</svg>
			</TaskSlot>
			<TaskSlot $w={55} $gap={15} $on="soft">
				<svg width="32" height="28" viewBox="0 0 32 28">
					<path d="M2 6l14-4 3 18-12 3z" fill="#8fd0a8" />
					<path d="M10 8l18-2 2 18-18 3z" fill="#f3e16a" stroke="#d8c44e" strokeWidth=".5" />
				</svg>
			</TaskSlot>
			<TaskSlot $w={55} $gap={3} $on="strong">
				<svg width="30" height="34" viewBox="0 0 30 34">
					<path d="M3 2h18v6H8v24H3z" fill="#27537f" />
					<rect x="8" y="7" width="20" height="25" fill="#eee7d8" stroke="#8d7f62" />
					<path d="M12 12v8M17 14v6M22 11v9" stroke="#555" strokeWidth="1.400" />
					<path d="M14 31l10-9 3 3-10 8z" fill="#e3b63f" />
				</svg>
			</TaskSlot>
			<Tray>
				<TrayIcon $w={27}>
					<svg width="27" height="16" viewBox="0 0 27 16">
						<rect x=".5" y=".5" width="26" height="15" fill="#fff" stroke="#ddd" />
						<path d="M3 3h21v7H3zM3 5.500h21M3 8h21M6 3v7M9 3v7M12 3v7M15 3v7M18 3v7M21 3v7" fill="none" stroke="#555" strokeWidth=".7" />
						<path d="M8 12.500h11" stroke="#555" strokeWidth="1.200" />
					</svg>
				</TrayIcon>
				<TrayIcon $w={34}>
					<svg width="8" height="5" viewBox="0 0 8 5"><path d="M0 5l4-5 4 5z" fill="#f0e6de" /></svg>
				</TrayIcon>
				<TrayIcon $w={20}>
					<svg width="13" height="17" viewBox="0 0 13 17">
						<path d="M1 0v17" stroke="#f0f0f0" strokeWidth="1.300" />
						<path d="M2 1h8v9H2z" fill="#efefef" />
						<rect x="5.500" y="8" width="7" height="8" fill="#d22" />
						<path d="M7 10l4 4M11 10l-4 4" stroke="#fff" />
					</svg>
				</TrayIcon>
				<TrayIcon $w={26}>
					<svg width="16" height="15" viewBox="0 0 16 15">
						<rect x="5" y="1" width="10" height="8" fill="none" stroke="#eee" strokeWidth="1.200" />
						<rect x="1" y=".5" width="4" height="9" rx="1" fill="#ddd" />
						<path d="M10 9v4M6 14h8" stroke="#eee" strokeWidth="1.200" />
					</svg>
				</TrayIcon>
				<TrayIcon $w={22}>
					<svg width="16" height="14" viewBox="0 0 16 14">
						<path d="M1 5h3l4-4v12L4 9H1z" fill="#efefef" />
						<path d="M10 4.500c1 1.500 1 3.500 0 5M12.500 3c1.500 2.500 1.500 5.500 0 8" fill="none" stroke="#e8e0d8" />
					</svg>
				</TrayIcon>
				<Clock>
					<span>8:46 a. m.</span>
					<span>11/2/17</span>
				</Clock>
			</Tray>
		</Taskbar>

		<Noise>
			<filter id="tvnoise">
				<feTurbulence type="fractalNoise" baseFrequency="1.1" numOctaves="1" seed="4" />
				<feColorMatrix type="saturate" values="6" />
				<feComponentTransfer>
					<feFuncA type="linear" slope="0" intercept="1" />
				</feComponentTransfer>
			</filter>
			<rect width="6" height="714" filter="url(#tvnoise)" />
		</Noise>

		<Dialog>
			<DialogTitle>
				Asistente de confirmación de aprovisionamiento
				<DialogButtons>
					<DialogButton><Minimize /></DialogButton>
					<DialogButton><Maximize /></DialogButton>
					<DialogButton><Close /></DialogButton>
				</DialogButtons>
			</DialogTitle>
			<DialogHead>
				<WizardTitle>Vista previa de resultados</WizardTitle>
				<WizardText>La lista a continuación muestra docum.adquisición que se generarán. Si las líneas de artículos</WizardText>
				<WizardText>p.pedidos de produción tienen distintas normas de reparto o códigos de proyecto, se</WizardText>
				<WizardText>generarán por separado pedidos de prod.según est.reglas/códigos.</WizardText>
			</DialogHead>
			<DialogRule />
			<DialogContent>
				<DialogFields>
					<DialogColumn>
						<DialogRow>
							<DialogLabel>Documento destino</DialogLabel>
							<Field $tone="gray">Pedido</Field>
						</DialogRow>
						<DialogRow $top={14}>
							<DialogLabel>Proveedor</DialogLabel>
							<Field $tone="gray">P-00004</Field>
						</DialogRow>
						<DialogRow>
							<DialogLabel>Nombre</DialogLabel>
							<Field $tone="gray">AIRCO, S. A.</Field>
						</DialogRow>
						<DialogRow $top={14}>
							<DialogLabel>Series de documento objetivo</DialogLabel>
							<Field $tone="gray">Primario</Field>
						</DialogRow>
					</DialogColumn>
					<DialogColumn>
						<DialogOption><Checkbox $dim /><span><u>I</u>mprimir documento de destino</span></DialogOption>
						<DialogOption><Checkbox $dim /><span><u>C</u>rear documento preliminar</span></DialogOption>
						<DeliveryRow>
							Fecha de entrega
							<Field $tone="gray" />
						</DeliveryRow>
					</DialogColumn>
				</DialogFields>
				<Sheet $left={0}>
					<SheetTop>
						<SheetGrid $w={503}>
							<SheetHead $cols={wizardCols} $h={17} $tone="#dcdcdc">
								{wizardHead.map((t, i) => (
									<HeadCell key={i} $pad={i === 1 ? 1 : 4}>{t}</HeadCell>
								))}
							</SheetHead>
							{wizardRows.map((row, r) => (
								<SheetRow key={r} $cols={wizardCols} $dim>
									{row.map((t, c) => (
										<Cell key={c} $dim $align={cellAlign(c)} $pad={c === 4 ? 15 : undefined}>{t}</Cell>
									))}
								</SheetRow>
							))}
						</SheetGrid>
						<SheetSide>
							<ExpandBox $h={17}><Expand size={12} /></ExpandBox>
							<VTrack>
								<ArrowUp />
								<ArrowDown />
							</VTrack>
						</SheetSide>
					</SheetTop>
					<HScroll $left={14} $w={489}>
						<HButton />
						<HThumb $w={169} $left={64} $tone="#c2c2c2">:::</HThumb>
						<HButtonRight />
					</HScroll>
				</Sheet>
				<DialogActions>
					<YellowButton $w={61} $h={17}>Desplegar</YellowButton>
					<YellowButton $w={60} $h={17}>Comprimir</YellowButton>
				</DialogActions>
			</DialogContent>
			<DialogFooter>
				<StepText>Paso 5 de 6</StepText>
				<ButtonGroup $gap={6}>
					<YellowButton $w={60} $h={17}>Cancelar</YellowButton>
					<YellowButton $w={59} $h={17}>Atrás</YellowButton>
					<YellowButton $w={60} $h={17}>Siguiente</YellowButton>
					<YellowButton $w={61} $h={17} $off>Finalizar</YellowButton>
				</ButtonGroup>
			</DialogFooter>
		</Dialog>

		<Pointer width="13" height="20" viewBox="0 0 13 20">
			<path d="M1.500 1v14l3.500-3 2.500 6 2.500-1-2.500-6H12z" fill="#fff" stroke="#222" />
		</Pointer>
	</Screen>
)

export default App
